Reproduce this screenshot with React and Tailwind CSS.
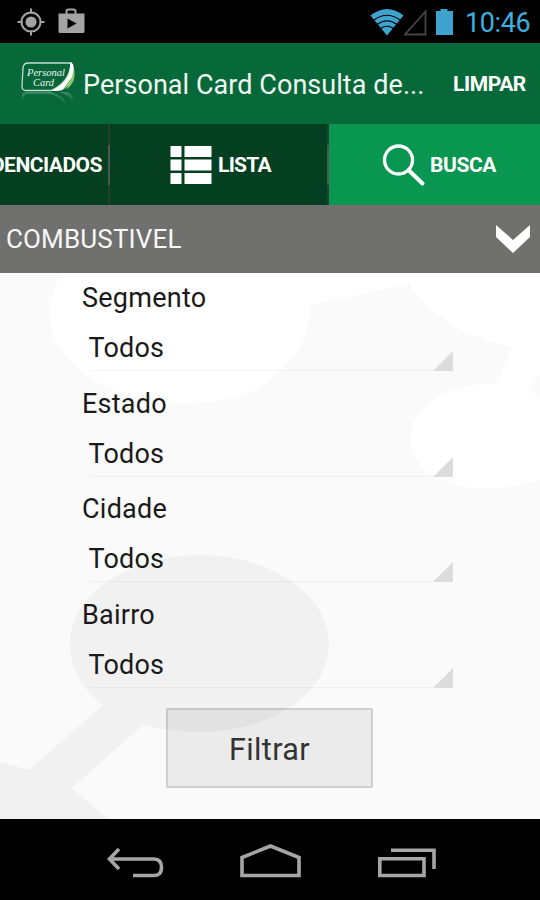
import React, { useState } from "react";

const fields = ["Segmento", "Estado", "Cidade", "Bairro"];

const StatusBar = () => (
  <div className="flex h-[43px] shrink-0 items-center bg-black pl-[17px] pr-[10px]">
    <svg width="28" height="28" viewBox="0 0 28 28" fill="none" stroke="#a3a3a3">
      <circle cx="14" cy="14" r="9.6" strokeWidth="2" />
      <circle cx="14" cy="14" r="5.6" fill="#a3a3a3" stroke="none" />
      <path d="M14 .5v5M14 22.500v5M.5 14h5M22.500 14h5" strokeWidth="2" />
    </svg>
    <svg className="ml-[13px]" width="28" height="28" viewBox="0 0 28 28">
      <path d="M8.500 6V3.500Q8.500 1.500 10.500 1.500H15.500Q17.500 1.500 17.500 3.500V6" fill="none" stroke="#a3a3a3" strokeWidth="2" />
      <path d="M0.500 5.500H26.500V23.500Q26.500 25 25 25H2Q.5 25 .5 23.500Z" fill="#a3a3a3" />
      <path d="M9.500 10.500v10l9-5z" fill="#000" />
    </svg>
    <svg className="ml-auto" width="34" height="28" viewBox="0 0 34 28">
      <path d="M.5 7.500Q17-5.500 33.500 7.500L17 27.500Z" fill="#3fa3cf" />
      <path d="M4 12Q17 2.500 30 12M7 16.500Q17 9 27 16.500M10.500 20.500Q17 16 23.500 20.500" fill="none" stroke="#000" strokeWidth="1.200" />
    </svg>
    <svg width="23" height="28" viewBox="0 0 23 28">
      <path d="M21.500 3.500V26.500H1Z" fill="none" stroke="#464646" strokeWidth="1.800" />
    </svg>
    <svg className="ml-[8px]" width="19" height="28" viewBox="0 0 19 28">
      <path d="M1 3h4.500V1h7v2H18v24H1z" fill="#3fa3cf" />
    </svg>
    <span className="ml-[11px] w-[65px] whitespace-nowrap pt-[2px] text-[27px] leading-[36px] tracking-[-0.4px] text-[#3db0e0]">
      10:46
    </span>
  </div>
);

const Logo = () => (
  <svg className="shrink-0" width="56" height="44" viewBox="0 0 56 44">
    <defs>
      <linearGradient id="fade" x1="0" y1="0" x2="0" y2="1">
        <stop offset="0" stopColor="#fff" stopOpacity=".22" />
        <stop offset="1" stopColor="#fff" stopOpacity="0" />
      </linearGradient>
    </defs>
    <path d="M7 1H50Q49 20 30 28.500H5Q.8 28.500 1 24L2 6Q2.500 1 7 1Z" fill="#07653a" stroke="#c4dccf" strokeWidth="1.300" />
    <path d="M49 .5Q52 .5 52.500 4Q55 20 42 27.500Q40 29 30 29Q51 19 49 .5Z" fill="#fff" />
    <path d="M53 7Q56 20 45 27.500Q51 18 53 7Z" fill="#8ccb6c" />
    <path d="M51 15Q49 23 42 27Q47 21 51 15Z" fill="#69b84a" />
    <text x="6" y="13.500" fontSize="9.5" fontStyle="italic" fill="#f0f7f2" textLength="38" lengthAdjust="spacingAndGlyphs" fontFamily="Liberation Serif, serif">Personal</text>
    <text x="12" y="24" fontSize="9.5" fontStyle="italic" fill="#f0f7f2" textLength="21" lengthAdjust="spacingAndGlyphs" fontFamily="Liberation Serif, serif">Card</text>
    <path d="M1 32Q2 30 5 30H30Q42 33 47 43H44Q38 34 30 32H5Q3 32 2 38H1Z" fill="url(#fade)" />
    <path d="M38 30H46Q53 33 53 41Q48 33 38 30Z" fill="url(#fade)" />
  </svg>
);

const TopBar = ({ onClear }) => (
  <header className="flex h-[81px] shrink-0 items-center bg-[#076939] pl-[21px] text-white">
    <Logo />
    <h1 className="ml-[6px] w-[350px] whitespace-nowrap pt-[2px] text-[27px] leading-[36px] tracking-[0.05px] text-[#f0f6f2]">
      Personal Card Consulta de...
    </h1>
    <button onClick={onClear} className="ml-[20px] whitespace-nowrap pt-[3px] text-[21px] font-bold tracking-[-0.4px]">
      LIMPAR
    </button>
  </header>
);

const Divider = () => (
  <div className="flex w-[2px] items-center bg-[#263f2c]">
    <div className="h-[40px] w-full bg-[#4a5a4d]" />
  </div>
);

const Tabs = () => (
  <nav className="flex h-[81px] shrink-0 overflow-hidden bg-[#043f21] text-[21px] font-bold tracking-[-0.7px] text-white">
    <div className="flex w-[108px] items-center justify-end pr-[6px]">
      <span className="whitespace-nowrap pt-[3px] tracking-[-0.5px]">CREDENCIADOS</span>
    </div>
    <Divider />
    <div className="flex w-[217px] items-center pl-[60px]">
      <svg width="42" height="38" viewBox="0 0 42 38" fill="#fff">
        <path d="M.5 0h11v11H.5zM14.500 0H41.500v11h-27zM.5 13.500h11v11H.5zM14.500 13.500h27v11h-27zM.5 27h11v11H.5zM14.500 27h27v11h-27z" />
      </svg>
      <span className="ml-[6px] pt-[3px]">LISTA</span>
    </div>
    <Divider />
    <div className="flex flex-1 items-center bg-[#099650] pl-[53px]">
      <svg width="44" height="44" viewBox="0 0 44 44" fill="none" stroke="#fff">
        <circle cx="16.500" cy="17" r="14" strokeWidth="3.300" />
        <path d="M26.500 27L40.500 40.500" strokeWidth="4" strokeLinecap="round" />
      </svg>
      <span className="ml-[4px] pt-[3px] tracking-[-0.4px]">BUSCA</span>
    </div>
  </nav>
);

// pale bubbles behind the form
const Bubbles = () => (
  <svg className="[grid-area:1/1]" width="540" height="546" viewBox="0 273 540 546">
    <rect y="273" width="540" height="546" fill="#fafafa" />
    <path d="M62 273Q43 303 54 338Q75 382 140 400Q205 412 261 388Q292 365 303 340Q311 320 311 305L409 284Q440 332 512 347L497 383Q430 385 412 425Q403 465 445 481Q485 497 540 480V398L530 391L540 370V273Z" fill="#fff" />
    <path d="M200 555C270 555 329 594 329 644S270 732 200 732Q170 732 143 725L72 788L108 819H0V762L29 770L103 705Q70 680 70 644C70 594 130 555 200 555Z" fill="#f1f1f1" />
  </svg>
);

const Field = ({ label, value }) => (
  <div className="h-[105.7px] pt-[7px]">
    <div className="text-[27px] leading-[36px] tracking-[0.25px]">{label}</div>
    <div className="ml-[6.5px] mt-[14px] flex h-[41px] w-[364.5px] items-start justify-between border-b border-black/4 text-[27px] leading-[36px] tracking-[0.15px]">
      <span>{value}</span>
      <svg className="-mb-px self-end" width="20" height="20" viewBox="0 0 20 20">
        <path d="M20 0V20H0Z" fill="#dcdcdc" />
      </svg>
    </div>
  </div>
);

const NavBar = () => (
  <footer className="flex h-[81px] shrink-0 items-start bg-black pl-[107px] pt-[24px]">
    <svg width="58" height="36" viewBox="0 0 58 36" fill="none" stroke="#a6a6a6" strokeWidth="3.600">
      <path d="M2 16H47Q54.500 16 54.500 24.500T46 32.500H26M12 6L2.500 16L12 26" />
    </svg>
    <svg className="ml-[74px]" width="64" height="36" viewBox="0 0 64 36" fill="none" stroke="#a6a6a6" strokeWidth="3.600">
      <path d="M3 32.500V14.500L31.500 3L60 14.500V32.500Z" />
    </svg>
    <svg className="ml-[74px]" width="60" height="36" viewBox="0 0 60 36" fill="none" stroke="#a6a6a6" strokeWidth="3.600">
      <path d="M2.800 15.800H47V32.500H2.800ZM14 7.200H57V26" />
    </svg>
  </footer>
);

const App = () => {
  const [values, setValues] = useState({});

  return (
    <div className="flex h-[900px] w-[540px] flex-col overflow-hidden bg-black font-[Roboto,sans-serif]">
      <StatusBar />
      <TopBar onClear={() => setValues({})} />
      <Tabs />
      <div className="flex h-[68px] shrink-0 items-center justify-between bg-[#70706e] pl-[6px] pr-[9px] text-[26px] tracking-[0.15px] text-[#f7f7f7]">
        <span>COMBUSTIVEL</span>
        <svg width="36" height="30" viewBox="0 0 36 30">
          <path d="M1 1L18 16L35 1V13L18 29L1 13Z" fill="#fff" />
        </svg>
      </div>
      <main className="grid h-[546px] shrink-0 overflow-hidden">
        <Bubbles />
        <div className="z-10 pl-[82px] text-[#1a1a1a] [grid-area:1/1]">
          {fields.map((label) => (
            <Field key={label} label={label} value={values[label] || "Todos"} />
          ))}
          <button className="ml-[84px] mt-[12px] h-[80px] w-[207px] rounded-[2px] border-2 border-black/12 bg-black/6 pt-[4px] text-[30.5px] tracking-[0.4px] text-[#333]">
            Filtrar
          </button>
        </div>
      </main>
      <NavBar />
    </div>
  );
};

export default App;
